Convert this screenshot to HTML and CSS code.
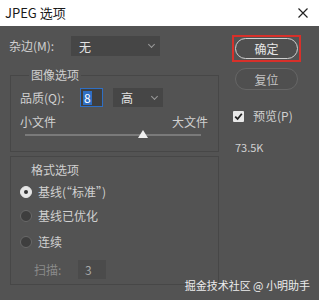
FILE: index.html
```html
<!DOCTYPE html>
<html lang="zh-CN">
<head>
    <meta charset="UTF-8">
    <meta name="viewport" content="width=device-width, initial-scale=1.0">
    <title>JPEG 选项</title>
    <link rel="stylesheet" href="styles.css">
</head>
<body>

<div class="dialog">
    <!-- Title bar -->
    <div class="titlebar">
        <span class="title">JPEG 选项</span>
        <svg class="close-icon" width="10" height="10" viewBox="0 0 10 10">
            <path d="M0.5 0.5 L9.5 9.5 M9.5 0.5 L0.5 9.5" stroke="#222" stroke-width="1.2" fill="none"/>
        </svg>
    </div>

    <div class="main">
        <div class="left-col">
            <div class="row matte-row">
                <span class="label matte-label">杂边(M):</span>
                <div class="select matte-select">
                    <span>无</span>
                    <span class="chevron"></span>
                </div>
            </div>

            <fieldset class="image-group">
                <legend>图像选项</legend>
                <div class="row quality-row">
                    <span class="label quality-label">品质(Q):</span>
                    <div class="num-input active"><span class="selected-text">8</span></div>
                    <div class="select quality-select">
                        <span>高</span>
                        <span class="chevron"></span>
                    </div>
                </div>
                <div class="slider-labels">
                    <span>小文件</span>
                    <span>大文件</span>
                </div>
                <div class="slider">
                    <div class="track"></div>
                    <div class="thumb" style="left: 67%"></div>
                </div>
            </fieldset>

            <div class="format-group">
                <div class="group-title">格式选项</div>
                <div class="radio-row first">
                    <span class="radio checked"></span>
                    <span class="label">基线(“标准”)</span>
                </div>
                <div class="radio-row second">
                    <span class="radio"></span>
                    <span class="label">基线已优化</span>
                </div>
                <div class="radio-row third">
                    <span class="radio"></span>
                    <span class="label">连续</span>
                </div>
                <div class="row scan-row">
                    <span class="label disabled">扫描:</span>
                    <div class="num-input disabled-input">3</div>
                </div>
            </div>
        </div>

        <div class="right-col">
            <div class="focus-ring">
                <button class="btn btn-primary">确定</button>
            </div>
            <button class="btn btn-secondary">复位</button>

            <div class="preview-row">
                <span class="checkbox">
                    <svg width="9" height="9" viewBox="0 0 9 9">
                        <path d="M1.2 4.6 L3.6 7 L7.8 1.8" stroke="#222" stroke-width="1.8" fill="none"/>
                    </svg>
                </span>
                <span class="label">预览(P)</span>
            </div>

            <div class="file-size">73.5K</div>
        </div>
    </div>

    <!-- Watermark -->
    <div class="watermark">掘金技术社区 @ 小明助手</div>
</div>

</body>
</html>
```

FILE: styles.css
```css
:root {
    --bg: #535353;
    --field-bg: #464646;
    --text: #d0d0d0;
    --text-dim: #8a8a8a;
    --line: #474747;
}

* {
    box-sizing: border-box;
}

body {
    margin: 0;
    background-color: var(--bg);
    font-family: "Noto Sans CJK SC", "Noto Sans", sans-serif;
    font-size: 12px;
    color: var(--text);
}

.dialog {
    position: relative;
    width: 319px;
    height: 300px;
    overflow: hidden;
}

/* Title bar */
.titlebar {
    height: 26px;
    background-color: #ffffff;
    display: flex;
    align-items: center;
    justify-content: space-between;
    padding: 0 11px 1px 5px;
}

.title {
    font-size: 13px;
    color: #1a1a1a;
    line-height: 16px;
}

.close-icon {
    display: block;
}

.main {
    display: flex;
    padding-left: 9px;
}

.left-col {
    width: 210px;
}

.row {
    display: flex;
    align-items: center;
}

.label {
    line-height: 16px;
    white-space: nowrap;
}

/* Matte row */
.matte-row {
    margin-top: 10px;
    height: 20px;
}

.matte-label {
    width: 62px;
}

.select {
    height: 20px;
    background-color: var(--field-bg);
    display: flex;
    align-items: center;
    justify-content: space-between;
    padding: 0 6px 0 8px;
    color: #e4e4e4;
}

.matte-select {
    width: 89px;
}

.chevron {
    width: 5px;
    height: 5px;
    border-right: 1px solid #9a9a9a;
    border-bottom: 1px solid #9a9a9a;
    transform: rotate(45deg);
    margin-top: -3px;
}

/* Image options group */
.image-group {
    margin: 11px 0 0 1px;
    padding: 0 9px 11px 9px;
    border: 1px solid var(--line);
    min-width: 0;
}

.image-group legend {
    margin-left: 9px;
    padding: 0 2px;
    line-height: 16px;
}

.quality-row {
    margin-top: 5px;
    height: 19px;
}

.quality-label {
    width: 60px;
}

.num-input {
    width: 23px;
    height: 19px;
    background-color: #3e3e3e;
    display: flex;
    align-items: center;
    padding-left: 4px;
    line-height: 14px;
}

.num-input.active {
    border: 1px solid #2f6fc4;
    padding-left: 2px;
}

.selected-text {
    background-color: #2f6fc4;
    color: #ffffff;
    padding: 0 1px;
}

.quality-select {
    width: 50px;
    margin-left: 10px;
    height: 19px;
}

.slider-labels {
    display: flex;
    justify-content: space-between;
    margin-top: 7px;
    line-height: 16px;
    padding-right: 1px;
}

.slider {
    position: relative;
    height: 10px;
    margin: 0 8px 0 5px;
}

.track {
    position: absolute;
    left: 0;
    right: 0;
    top: 4px;
    height: 2px;
    background-color: #7a7a7a;
}

.thumb {
    position: absolute;
    top: 0;
    width: 0;
    height: 0;
    margin-left: -5px;
    border-left: 5px solid transparent;
    border-right: 5px solid transparent;
    border-bottom: 8px solid #efefef;
}

/* Format options group */
.format-group {
    margin: 4px 0 0 1px;
    border: 1px solid var(--line);
    height: 129px;
    padding: 5px 0 0 9px;
}

.group-title {
    padding-left: 11px;
    line-height: 16px;
}

.radio-row {
    display: flex;
    align-items: center;
    height: 16px;
}

.radio-row.first {
    margin-top: 6px;
}

.radio-row.second {
    margin-top: 8px;
}

.radio-row.third {
    margin-top: 10px;
}

.radio {
    width: 12px;
    height: 12px;
    border-radius: 50%;
    background-color: #3e3e3e;
    border: 1px solid #686868;
    margin-right: 6px;
    position: relative;
}

.radio.checked {
    background-color: #e6e6e6;
    border-color: #e6e6e6;
}

.radio.checked::after {
    content: "";
    position: absolute;
    left: 3px;
    top: 3px;
    width: 4px;
    height: 4px;
    border-radius: 50%;
    background-color: #333;
}

.scan-row {
    margin-top: 10px;
    height: 19px;
    padding-left: 14px;
}

.disabled {
    color: var(--text-dim);
    width: 44px;
}

.disabled-input {
    width: 28px;
    background-color: #4b4b4b;
    color: #a8a8a8;
    padding-left: 7px;
}

/* Right column */
.right-col {
    margin-left: 13px;
    padding-top: 9px;
}

.focus-ring {
    width: 69px;
    height: 27px;
    border: 2px solid #d8302a;
    padding: 1px;
}

.btn {
    display: flex;
    align-items: center;
    justify-content: center;
    width: 63px;
    height: 21px;
    border-radius: 11px;
    background-color: #4f4f4f;
    font-family: "Noto Sans CJK SC", "Noto Sans", sans-serif;
    font-size: 12px;
    padding: 0;
}

.btn-primary {
    border: 1px solid #cfcfcf;
    color: #e6e6e6;
}

.btn-secondary {
    margin: 6px 0 0 3px;
    height: 22px;
    border: 1px solid #666666;
    color: #c4c4c4;
}

.preview-row {
    display: flex;
    align-items: center;
    margin: 18px 0 0 1px;
}

.checkbox {
    width: 11px;
    height: 11px;
    background-color: #e8e8e8;
    border-radius: 1px;
    display: flex;
    align-items: center;
    justify-content: center;
    margin-right: 9px;
}

.file-size {
    margin: 16px 0 0 3px;
    font-size: 11px;
    line-height: 14px;
}

.watermark {
    position: absolute;
    right: 9px;
    bottom: 8px;
    font-size: 11px;
    line-height: 14px;
    color: #ececec;
}
```
